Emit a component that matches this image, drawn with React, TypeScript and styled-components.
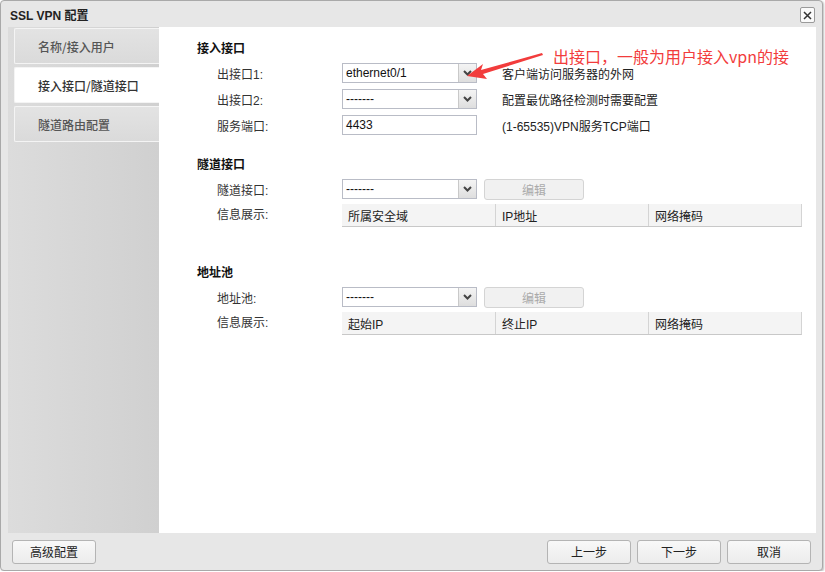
import React from "react";
import styled, { createGlobalStyle } from "styled-components";

const Global = createGlobalStyle`
  html, body { margin: 0; padding: 0; background: #fff; }
  body { font-family: "Liberation Sans", Arial, "Noto Sans CJK SC", sans-serif; font-size: 12px; color: #222; }
`;

const Dialog = styled.div`
  width: 823px;
  height: 571px;
  border: 1px solid #a9a9a9;
  border-radius: 4px;
  background: #e7e7e7;
  box-shadow: 1px 1px 2px rgba(0,0,0,0.25);
  display: flex;
  flex-direction: column;
  box-sizing: border-box;
`;

const TitleBar = styled.div`
  height: 26px;
  display: flex;
  align-items: center;
  justify-content: space-between;
  padding: 0 7px 0 9px;
  font-weight: bold;
  font-size: 12px;
  color: #222;
`;

const CloseBtn = styled.div`
  width: 13px;
  height: 14px;
  border: 1px solid #9a9a9a;
  border-radius: 2px;
  background: #fafafa;
  display: flex;
  align-items: center;
  justify-content: center;
  margin-top: 2px;
`;

const Body = styled.div`
  flex: 1;
  display: flex;
  margin: 0 6px 0 7px;
  min-height: 0;
`;

const Sidebar = styled.div`
  width: 151px;
  background: linear-gradient(to right, #dcdcdc, #d0d0d0);
  display: flex;
  flex-direction: column;
  gap: 3px;
  padding: 1px 0 0 6px;
  box-sizing: border-box;
`;

const Tab = styled.div<{ $active?: boolean }>`
  height: 36px;
  box-sizing: border-box;
  border: 1px solid #f4f4f4;
  border-right: none;
  border-radius: 2px 0 0 2px;
  background: ${(p) => (p.$active ? "#ffffff" : "linear-gradient(to bottom, #e3e3e3, #dadada)")};
  color: ${(p) => (p.$active ? "#333" : "#555")};
  display: flex;
  align-items: center;
  padding-left: 23px;
  font-family: "Noto Sans CJK SC", sans-serif;
  font-size: 12px;
  font-weight: 500;
`;

const Main = styled.div`
  flex: 1;
  background: #fff;
  padding: 13px 13px 0 38px;
  position: relative;
`;

const Section = styled.div`
  display: flex;
  flex-direction: column;
`;

const SectionTitle = styled.div`
  font-family: "Noto Sans CJK SC", sans-serif;
  font-weight: bold;
  font-size: 12px;
  color: #111;
  height: 16px;
  line-height: 16px;
  margin-bottom: 4px;
`;

const Row = styled.div<{ $top?: boolean }>`
  display: grid;
  grid-template-columns: 125px 135px 1fr;
  align-items: ${(p) => (p.$top ? "start" : "center")};
  height: 26px;
  padding-left: 20px;
`;

const Label = styled.div<{ $offset?: number }>`
  font-family: "Liberation Sans", "Noto Sans CJK SC", sans-serif;
  font-size: 12px;
  color: #333;
  margin-top: ${(p) => p.$offset ?? 0}px;
`;

const SelectBox = styled.div`
  height: 20px;
  width: 135px;
  box-sizing: border-box;
  border: 1px solid #b9bcc6;
  display: flex;
  align-items: stretch;
  background: #fff;
`;

const SelectText = styled.div`
  flex: 1;
  padding-left: 3px;
  display: flex;
  align-items: center;
  font-size: 12px;
  color: #111;
`;

const SelectArrow = styled.div`
  width: 17px;
  border-left: 1px solid #c9c9c9;
  background: linear-gradient(to bottom, #f4f4f4, #dedede);
  display: flex;
  align-items: center;
  justify-content: center;
`;

const TextInput = styled.div`
  height: 20px;
  box-sizing: border-box;
  border: 1px solid #b9bcc6;
  padding-left: 3px;
  display: flex;
  align-items: center;
  font-size: 12px;
  color: #111;
`;

const Hint = styled.div`
  padding-left: 25px;
  font-family: "Liberation Sans", "Noto Sans CJK SC", sans-serif;
  font-size: 12px;
  color: #222;
`;

const EditBtn = styled.div`
  margin-left: 7px;
  width: 100px;
  height: 21px;
  box-sizing: border-box;
  border: 1px solid #d4d4d4;
  border-radius: 3px;
  background: #f1f1f1;
  color: #aaa;
  display: flex;
  align-items: center;
  justify-content: center;
  font-family: "Noto Sans CJK SC", sans-serif;
  font-size: 12px;
`;

const SelectWithBtn = styled.div`
  display: flex;
  align-items: center;
  grid-column: 2 / 4;
`;

const Table = styled.div`
  grid-column: 2 / 4;
  display: grid;
  grid-template-columns: 153px 153px 154px;
  width: 460px;
  height: 23px;
  background: #f4f4f4;
  border-bottom: 1px solid #c8c8c8;
  border-right: 1px solid #d4d4d4;
  box-sizing: border-box;
  margin-top: 2px;
`;

const Cell = styled.div<{ $first?: boolean }>`
  display: flex;
  align-items: center;
  padding-left: 6px;
  border-left: ${(p) => (p.$first ? "none" : "1px solid #d4d4d4")};
  font-family: "Liberation Sans", "Noto Sans CJK SC", sans-serif;
  font-size: 12px;
  color: #222;
`;

const Footer = styled.div`
  height: 37px;
  display: flex;
  align-items: center;
  justify-content: space-between;
  padding: 0 11px 0 11px;
`;

const FooterGroup = styled.div`
  display: flex;
  gap: 6px;
`;

const Btn = styled.div`
  width: 84px;
  height: 24px;
  box-sizing: border-box;
  border: 1px solid #b4b4b4;
  border-radius: 3px;
  background: linear-gradient(to bottom, #f8f8f8, #ececec);
  display: flex;
  align-items: center;
  justify-content: center;
  font-family: "Noto Sans CJK SC", sans-serif;
  font-size: 12px;
  color: #222;
`;

const Annotation = styled.div`
  position: absolute;
  left: 394px;
  top: 17px;
  color: #f23c3c;
  font-family: "Noto Sans CJK SC", sans-serif;
  font-size: 16px;
  white-space: nowrap;
`;

const ArrowSvg = styled.svg`
  position: absolute;
  left: 308px;
  top: 23px;
`;

const Spacer = styled.div<{ $h: number }>`
  height: ${(p) => p.$h}px;
`;

const Caret = () => (
  <svg width="9" height="6" viewBox="0 0 9 6">
    <path d="M1 1 L4.5 4.5 L8 1" fill="none" stroke="#444" strokeWidth="2" />
  </svg>
);

const Select = ({ value }: { value: string }) => (
  <SelectBox>
    <SelectText>{value}</SelectText>
    <SelectArrow>
      <Caret />
    </SelectArrow>
  </SelectBox>
);

export default function App() {
  return (
    <>
      <Global />
      <Dialog>
        <TitleBar>
          <span>SSL VPN 配置</span>
          <CloseBtn>
            <svg width="9" height="9" viewBox="0 0 9 9">
              <path d="M1 1 L8 8 M8 1 L1 8" stroke="#333" strokeWidth="1.5" />
            </svg>
          </CloseBtn>
        </TitleBar>
        <Body>
          <Sidebar>
            <Tab>名称/接入用户</Tab>
            <Tab $active>接入接口/隧道接口</Tab>
            <Tab>隧道路由配置</Tab>
          </Sidebar>
          <Main>
            <Section>
              <SectionTitle>接入接口</SectionTitle>
              <Row>
                <Label>出接口1:</Label>
                <Select value="ethernet0/1" />
                <Hint>客户端访问服务器的外网</Hint>
              </Row>
              <Row>
                <Label>出接口2:</Label>
                <Select value="-------" />
                <Hint>配置最优路径检测时需要配置</Hint>
              </Row>
              <Row>
                <Label>服务端口:</Label>
                <TextInput>4433</TextInput>
                <Hint>(1-65535)VPN服务TCP端口</Hint>
              </Row>
            </Section>
            <Spacer $h={18} />
            <Section>
              <SectionTitle>隧道接口</SectionTitle>
              <Row>
                <Label>隧道接口:</Label>
                <SelectWithBtn>
                  <Select value="-------" />
                  <EditBtn>编辑</EditBtn>
                </SelectWithBtn>
              </Row>
              <Row $top>
                <Label $offset={3}>信息展示:</Label>
                <Table>
                  <Cell $first>所属安全域</Cell>
                  <Cell>IP地址</Cell>
                  <Cell>网络掩码</Cell>
                </Table>
              </Row>
            </Section>
            <Spacer $h={36} />
            <Section>
              <SectionTitle>地址池</SectionTitle>
              <Row>
                <Label>地址池:</Label>
                <SelectWithBtn>
                  <Select value="-------" />
                  <EditBtn>编辑</EditBtn>
                </SelectWithBtn>
              </Row>
              <Row $top>
                <Label $offset={3}>信息展示:</Label>
                <Table>
                  <Cell $first>起始IP</Cell>
                  <Cell>终止IP</Cell>
                  <Cell>网络掩码</Cell>
                </Table>
              </Row>
            </Section>
            <ArrowSvg width="80" height="40" viewBox="0 0 80 40">
              <path d="M0 26 L16 14 L14 20 L75 3 L76 5 L16 24 L20 29 Z" fill="#f23c3c" />
            </ArrowSvg>
            <Annotation>出接口，一般为用户接入vpn的接</Annotation>
          </Main>
        </Body>
        <Footer>
          <Btn>高级配置</Btn>
          <FooterGroup>
            <Btn>上一步</Btn>
            <Btn>下一步</Btn>
            <Btn>取消</Btn>
          </FooterGroup>
        </Footer>
      </Dialog>
    </>
  );
}
